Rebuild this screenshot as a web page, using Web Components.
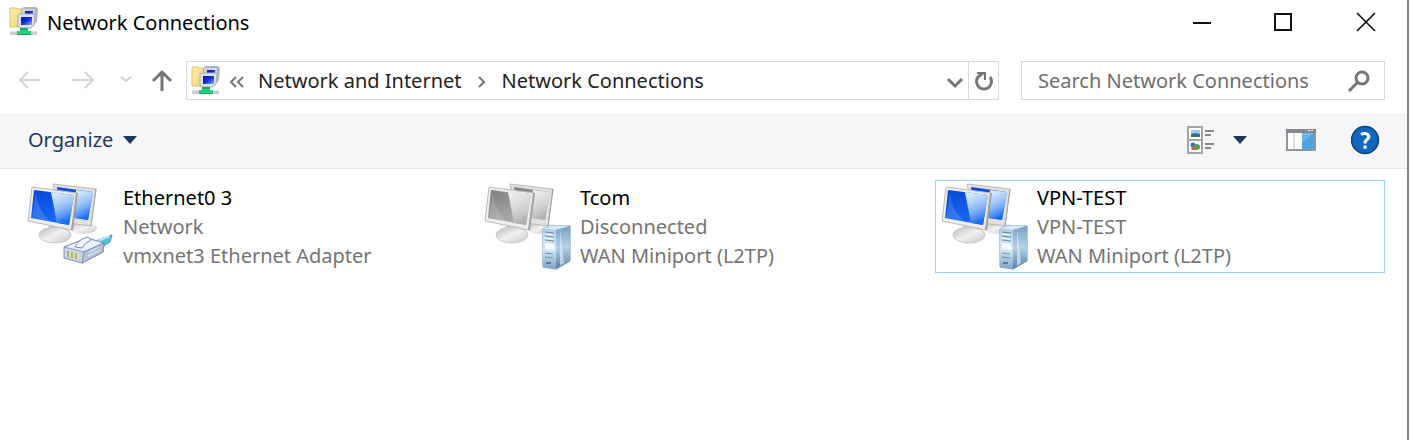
<!DOCTYPE html>
<html lang="en">
<head>
<meta charset="utf-8">
<title>Network Connections</title>
<style>
  body {
    margin: 0;
    background: #fff;
    font-family: "Noto Sans", "Open Sans", sans-serif;
    font-size: 20px;
    line-height: 29px;
    color: #000;
  }
</style>
</head>
<body>
<explorer-window>
  <title-bar slot="title">Network Connections</title-bar>
  <address-row slot="address"></address-row>
  <command-bar slot="commands"></command-bar>
  <connection-item name="Ethernet0 3" status="Network" device="vmxnet3 Ethernet Adapter" kind="lan"></connection-item>
  <connection-item name="Tcom" status="Disconnected" device="WAN Miniport (L2TP)" kind="wan" off></connection-item>
  <connection-item name="VPN-TEST" status="VPN-TEST" device="WAN Miniport (L2TP)" kind="wan" selected></connection-item>
</explorer-window>

<script>
const buttonReset = /*css*/`
  button {
    display: flex;
    align-items: center;
    justify-content: center;
    margin: 0;
    padding: 0;
    border: 0;
    background: none;
    font: inherit;
    color: inherit;
  }
  svg { display: block; flex: none; }
`;

class ExplorerWindow extends HTMLElement {
  constructor() {
    super();
    this.attachShadow({ mode: 'open' });
    this.shadowRoot.innerHTML = /*html*/`
      <style>
        :host {
          display: flex;
          flex-direction: column;
          box-sizing: border-box;
          min-height: 100vh;
          margin-right: 1px;
          border-right: 2px solid #858585;
        }
        main {
          display: grid;
          grid-template-columns: repeat(3, 1fr);
          gap: 7px;
          padding: 11px 22px 11px 21px;
        }
      </style>
      <slot name="title"></slot>
      <slot name="address"></slot>
      <slot name="commands"></slot>
      <main><slot></slot></main>
    `;
  }
}

// Folder with two small monitors on a green network line
class NetworkIcon extends HTMLElement {
  constructor() {
    super();
    this.attachShadow({ mode: 'open' });
    this.shadowRoot.innerHTML = /*html*/`
      <style>
        :host { display: block; flex: none; }
        svg { display: block; }
      </style>
      <svg width="30" height="30" viewBox="0 0 30 30" aria-hidden="true">
        <defs>
          <linearGradient id="folder" x2="1" y2="1">
            <stop offset="0" stop-color="#fff3b4"/><stop offset="1" stop-color="#efcf70"/>
          </linearGradient>
          <linearGradient id="blue" x2="1" y2="1">
            <stop offset="0" stop-color="#0a12b4"/><stop offset=".5" stop-color="#1530dc"/><stop offset="1" stop-color="#8fb2f5"/>
          </linearGradient>
        </defs>
        <path d="M1 1h6l1 1h5v18H1z" fill="url(#folder)" stroke="#dcc067"/>
        <path d="M13 1l2-1h12l2 2-1 12-3 4H12V3z" fill="#aeb3bc"/>
        <path d="M13 2h13v12H13z" fill="#d0d4da"/>
        <path d="M16 4h8v7h-8z" fill="url(#blue)"/>
        <path d="M10 7h15l1 1-1 10-3 3H10l-1-1V8z" fill="#dfe3e8" stroke="#a9afb8"/>
        <path d="M12 10h11v8H12z" fill="url(#blue)"/>
        <path d="M1 24h27v4H1z" fill="#c8cdd3"/>
        <path d="M1 24h27v1H1z" fill="#e2e5e8"/>
        <path d="M11 21h8v3h3v4H8v-4h3z" fill="#25cf7c"/>
        <path d="M11 21h8v2h-8zM8 27h14v1H8z" fill="#16a764"/>
      </svg>
    `;
  }
}

class TitleBar extends HTMLElement {
  constructor() {
    super();
    this.attachShadow({ mode: 'open' });
    this.shadowRoot.innerHTML = /*html*/`
      <style>
        ${buttonReset}
        :host {
          display: flex;
          align-items: stretch;
          height: 44px;
          padding-left: 9px;
        }
        h1 {
          flex: 1;
          display: flex;
          align-items: center;
          gap: 8px;
          margin: 0;
          font: inherit;
        }
        button { width: 82px; }
        button:hover { background: #e5e5e5; }
      </style>
      <h1><network-icon></network-icon><slot></slot></h1>
      <button type="button" aria-label="Minimize">
        <svg width="20" height="20" fill="none" stroke="#111" stroke-width="2"><path d="M1 11h18"/></svg>
      </button>
      <button type="button" aria-label="Maximize">
        <svg width="20" height="20" fill="none" stroke="#111" stroke-width="2"><path d="M1 2h16v16H1z"/></svg>
      </button>
      <button type="button" aria-label="Close">
        <svg width="20" height="20" fill="none" stroke="#111" stroke-width="1.7"><path d="M1 1l18 18M19 1L1 19"/></svg>
      </button>
    `;
  }
}

class AddressRow extends HTMLElement {
  constructor() {
    super();
    this.attachShadow({ mode: 'open' });
    this.shadowRoot.innerHTML = /*html*/`
      <style>
        ${buttonReset}
        :host {
          display: flex;
          align-items: center;
          padding: 17px 22px 13px 18px;
          color: #222;
        }
        .history {
          display: flex;
          align-items: center;
          gap: 28px;
          margin-right: 12px;
        }
        .history button:nth-child(3) { margin: 0 -10px 0 -4px; }
        .path, .search {
          display: flex;
          align-items: center;
          box-sizing: border-box;
          height: 39px;
          border: 1px solid #d9d9d9;
          background: #fff;
        }
        .path {
          flex: 1;
          padding-left: 4px;
          margin-right: 22px;
        }
        .path .crumbs {
          flex: 1;
          display: flex;
          align-items: center;
          gap: 12px;
          margin-left: 7px;
        }
        .refresh {
          align-self: stretch;
          width: 30px;
          margin-left: 4px;
          border-left: 1px solid #d9d9d9;
        }
        .search {
          width: 364px;
          padding: 0 13px 0 16px;
        }
        input {
          flex: 1;
          min-width: 0;
          padding: 0;
          border: 0;
          outline: 0;
          background: none;
          font: inherit;
          color: #222;
        }
        input::placeholder { color: #6d6d6d; opacity: 1; }
      </style>
      <div class="history">
        <button type="button" aria-label="Back">
          <svg width="24" height="24" fill="none" stroke="#d6d6d6" stroke-width="2"><path d="M2 11h20M10 3l-8 8 8 8"/></svg>
        </button>
        <button type="button" aria-label="Forward">
          <svg width="24" height="24" fill="none" stroke="#d6d6d6" stroke-width="2"><path d="M2 11h21M15 3l8 8-8 8"/></svg>
        </button>
        <button type="button" aria-label="Recent locations">
          <svg width="14" height="24" fill="none" stroke="#cfcfcf" stroke-width="2"><path d="M3 8l5 4 5-4"/></svg>
        </button>
        <button type="button" aria-label="Up">
          <svg width="24" height="24" fill="none" stroke="#757575" stroke-width="3"><path d="M12 22V3M3 12l9-9 9 9"/></svg>
        </button>
      </div>
      <div class="path">
        <network-icon></network-icon>
        <div class="crumbs">
          <button type="button" aria-label="Parent folders">
            <svg width="18" height="20" fill="none" stroke="#777" stroke-width="2"><path d="M8 6l-5 5 5 5M15 6l-5 5 5 5"/></svg>
          </button>
          <button type="button">Network and Internet</button>
          <svg width="16" height="20" fill="none" stroke="#777" stroke-width="2" aria-hidden="true"><path d="M5 6l5 5-5 5"/></svg>
          <button type="button">Network Connections</button>
        </div>
        <button type="button" aria-label="Previous locations">
          <svg width="18" height="20" fill="none" stroke="#757575" stroke-width="3"><path d="M2 8l7 7 7-7"/></svg>
        </button>
        <button type="button" class="refresh" aria-label="Refresh">
          <svg width="20" height="22" fill="none" stroke="#757575" stroke-width="3">
            <path d="M16 7a7.500 7.500 0 1 1-12 0l5-4"/><path d="M3 3h8v7" stroke-width="2"/>
          </svg>
        </button>
      </div>
      <div class="search">
        <input type="text" placeholder="Search Network Connections" aria-label="Search Network Connections">
        <button type="button" aria-label="Search">
          <svg width="24" height="24" fill="none" stroke="#757575" stroke-width="3"><circle cx="15" cy="9" r="6"/><path d="M11 13l-9 9"/></svg>
        </button>
      </div>
    `;
  }
}

class CommandBar extends HTMLElement {
  constructor() {
    super();
    this.attachShadow({ mode: 'open' });
    this.shadowRoot.innerHTML = /*html*/`
      <style>
        ${buttonReset}
        :host {
          display: flex;
          align-items: center;
          box-sizing: border-box;
          height: 56px;
          padding: 0 26px 2px 28px;
          border-bottom: 1px solid #e6e8ea;
          background: #f4f6f8;
          color: #1e395b;
        }
        .organize { gap: 9px; margin-right: auto; }
        .tools { display: flex; align-items: center; }
        .view { gap: 18px; margin-right: 38px; }
        .pane { margin-right: 35px; }
      </style>
      <button type="button" class="organize">Organize
        <svg width="16" height="10"><path d="M1 1h14L8 9z" fill="#1e395b"/></svg>
      </button>
      <div class="tools">
        <button type="button" class="view" aria-label="Change your view">
          <svg width="28" height="28">
            <path d="M2 1h14v26H2zM2 14h14" fill="#fff" stroke="#a6a6a6" stroke-width="2"/>
            <path d="M5 4h9v7H5z" fill="#9ccbf0"/>
            <path d="M5 8l4-1 5 1v3H5z" fill="#2a6f9d"/>
            <path d="M5 10h9v1H5z" fill="#3f7d4b"/>
            <circle cx="7" cy="19" r="2.5" fill="#3b6fc4"/>
            <circle cx="11" cy="21" r="3" fill="#4ca54b"/>
            <path d="M5 22l5-2v4H6z" fill="#d3613b"/>
            <path d="M19 5h9M19 9h6M19 18h9M19 22h6" stroke="#888" stroke-width="2"/>
          </svg>
          <svg width="16" height="10"><path d="M1 1h14L8 9z" fill="#1e395b"/></svg>
        </button>
        <button type="button" class="pane" aria-label="Show the preview pane">
          <svg width="30" height="22">
            <path d="M1 1h28v20H1z" fill="#fff" stroke="#939699" stroke-width="2"/>
            <path d="M0 0h30v4H0z" fill="#85898d"/>
            <path d="M22 1h2v1h-2zM25 1h2v1h-2z" fill="#fff"/>
            <path d="M8 4v16" stroke="#b5b7b9"/>
            <path d="M16 4h12v16H16z" fill="#4ba3e0"/>
            <path d="M16 4h12L16 14z" fill="#6bb7ea"/>
          </svg>
        </button>
        <button type="button" aria-label="Get help">
          <svg width="30" height="30" fill="none">
            <circle cx="14" cy="15" r="13.5" fill="#1266bd" stroke="#0d4678" stroke-width="1.5"/>
            <path d="M10 9.500q4-2 7 0 2 3-1 5-2 1.500-2 4" stroke="#fff" stroke-width="3"/>
            <path d="M12.500 20.500h3.200v3.200h-3.200z" fill="#fff"/>
          </svg>
        </button>
      </div>
    `;
  }
}

const lanPlug = /*html*/`
  <path d="M68 58l17-6-2 7-8 5z" fill="#5bbddb" stroke="#3a9fc2"/>
  <path d="M70 58l13-5" stroke="#b8eaf4" stroke-width="2"/>
  <path d="M37 64l23-9 17 5-1 9-21 11-18-5z" fill="#ccd8e8" stroke="#8090ae"/>
  <path d="M37 64l23-9 17 5-20 9z" fill="#e9eff7" stroke="#8696b4"/>
  <path d="M57 69l20-9-1 9-21 11z" fill="#b4c3dc" stroke="#7c8db0"/>
  <path d="M48 64q4-8 13-10l3 3q-7 3-9 8z" fill="#f7faff" stroke="#7c8db0"/>
  <path d="M41 68v6M45 69v6M49 70v6" stroke="#b8b850" stroke-width="2"/>
  <path d="M62 69l10-5M61 73l12-6" stroke="#dfe8f3"/>
`;

const wanServer = /*html*/`
  <path d="M59 46l7-3h20v35l-14 8-13-2z" fill="#8fb3d0" stroke="#7094b2"/>
  <path d="M59 46l7-3h20l-14 4z" fill="#d8e9f5"/>
  <path d="M59 46l13 1v39l-13-2z" fill="url(#front)"/>
  <path d="M72 47l14-4v35l-14 8z" fill="url(#side)"/>
  <path d="M76 46l4 34-4 3z" fill="#e2f1fa" opacity=".6"/>
  <path d="M61 49l9 1M61 53l9 1M61 57l9 1M61 70l8 1M61 74l8 1" stroke="#698daa" stroke-width="1"/>
  <path d="M61 60l9 1v6l-9-1z" fill="#f4faff"/>
  <path d="M61 51l8 1M61 55l8 1" stroke="#fff"/>
  <path d="M62 80h5" stroke="#547c9d" stroke-width="2"/>
`;

class ConnectionItem extends HTMLElement {
  constructor() {
    super();
    this.attachShadow({ mode: 'open' });
  }

  connectedCallback() {
    const off = this.hasAttribute('off');
    const deep = off ? '#7d7d7d' : '#0646d6';
    const mid = off ? '#b0b0b0' : '#1a6cf5';
    const pale = off ? '#f4f4f4' : '#e4f5ff';
    this.shadowRoot.innerHTML = /*html*/`
      <style>
        ${buttonReset}
        :host { display: block; min-width: 0; }
        button {
          justify-content: flex-start;
          gap: 8px;
          width: 100%;
          padding: 2px 5px;
          border: 1px solid transparent;
          text-align: left;
        }
        :host([selected]) button { border-color: #99d1ff; }
        .text { min-width: 0; }
        .text span { display: block; color: #747474; }
        .text .name { color: #000; }
      </style>
      <button type="button">
        <svg width="88" height="87" viewBox="0 0 88 87" fill="none" aria-hidden="true">
          <defs>
            <linearGradient id="screen" x2=".6" y2="1">
              <stop offset="0" stop-color="${deep}"/><stop offset="1" stop-color="${mid}"/>
            </linearGradient>
            <linearGradient id="glare" x2=".3" y2="1">
              <stop offset="0" stop-color="${pale}"/><stop offset=".4" stop-color="${pale}" stop-opacity=".75"/><stop offset="1" stop-color="${mid}"/>
            </linearGradient>
            <linearGradient id="base" x2="1" y2="1">
              <stop offset="0" stop-color="#b9b9b9"/><stop offset=".5" stop-color="#f1f1f1"/><stop offset="1" stop-color="#c4c4c4"/>
            </linearGradient>
            <linearGradient id="front" x2="0" y2="1">
              <stop offset="0" stop-color="#acd0ea"/><stop offset=".5" stop-color="#d8eaf6"/><stop offset="1" stop-color="#7fa6c5"/>
            </linearGradient>
            <linearGradient id="side" x2="0" y2="1">
              <stop offset="0" stop-color="#76a0c2"/><stop offset=".5" stop-color="#b4d2e6"/><stop offset="1" stop-color="#567fa2"/>
            </linearGradient>
          </defs>
          <ellipse cx="56" cy="45" rx="14" ry="6" fill="url(#base)"/>
          <path d="M26 1l43 5-5 37-30-4z" fill="#e2e1df" stroke="#bcbab6"/>
          <path d="M30 4l36 5-5 28-27-4z" fill="url(#screen)"/>
          <path d="M49 7l17 2-5 28-13-2z" fill="url(#glare)"/>
          <path d="M69 6l-5 37" stroke="#a5a29d"/>
          <path d="M22 40l14 3-1 10H22z" fill="#cbcac8"/>
          <ellipse cx="28" cy="52" rx="16" ry="8" fill="url(#base)" stroke="#c9c8c6"/>
          <path d="M5 4l45 6-5 37L1 38z" fill="#eeedea" stroke="#bdbab5"/>
          <path d="M7 7l40 5-5 30-38-7z" fill="url(#screen)"/>
          <path d="M24 9l23 3-5 30-12-2z" fill="url(#glare)"/>
          <path d="M9 10q2 18 14 28L5 35z" fill="#fff" opacity=".15"/>
          <path d="M50 10l-5 37" stroke="#a5a29d" stroke-width="2"/>
          ${this.getAttribute('kind') === 'lan' ? lanPlug : wanServer}
        </svg>
        <span class="text">
          <span class="name">${this.getAttribute('name')}</span>
          <span>${this.getAttribute('status')}</span>
          <span>${this.getAttribute('device')}</span>
        </span>
      </button>
    `;
  }
}

customElements.define('network-icon', NetworkIcon);
customElements.define('title-bar', TitleBar);
customElements.define('address-row', AddressRow);
customElements.define('command-bar', CommandBar);
customElements.define('connection-item', ConnectionItem);
customElements.define('explorer-window', ExplorerWindow);
</script>
</body>
</html>
